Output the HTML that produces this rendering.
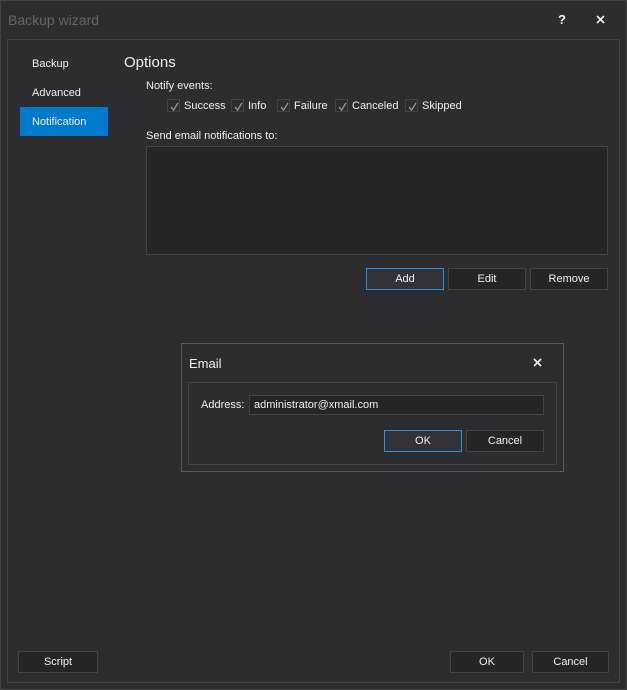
<!DOCTYPE html>
<html><head><style>
*{box-sizing:border-box;margin:0;padding:0}
body{width:627px;height:690px;background:#2d2d30;font-family:"Liberation Sans",sans-serif;font-size:11px;color:#f1f1f1;position:relative;overflow:hidden}
.a{position:absolute}
.win{left:0;top:0;width:627px;height:690px;border:1px solid #434346}
.btn{position:absolute;height:22px;border:1px solid #434346;background:#252526;color:#f1f1f1;text-align:center;line-height:20px;font-size:11px}
.cb{position:absolute;top:99px;width:13px;height:13px;border:1px solid #434346;background:#2d2d30}
.cb svg{position:absolute;left:1px;top:1px}
.lbl{position:absolute;top:100px}
</style></head><body>
<div class="a win"></div>
<div class="a" style="left:8px;top:12px;font-size:14px;color:#656568">Backup wizard</div>
<div class="a" style="left:558px;top:12px;font-size:13px;font-weight:bold;color:#f1f1f1">?</div>
<svg class="a" style="left:596px;top:15px" width="9" height="9"><path d="M1 1L8 8M8 1L1 8" stroke="#f1f1f1" stroke-width="1.6"/></svg>
<div class="a" style="left:7px;top:39px;width:613px;height:644px;border:1px solid #434346"></div>
<div class="a" style="left:32px;top:58px">Backup</div>
<div class="a" style="left:32px;top:87px">Advanced</div>
<div class="a" style="left:20px;top:107px;width:88px;height:29px;background:#007acc"></div>
<div class="a" style="left:32px;top:116px">Notification</div>
<div class="a" style="left:124px;top:54px;font-size:15px">Options</div>
<div class="a" style="left:146px;top:80px">Notify events:</div>
<div class="cb" style="left:167px"><svg width="11" height="11"><path d="M2 6L4.5 9L9 2" stroke="#999" fill="none" stroke-width="1.3"/></svg></div><div class="lbl" style="left:184px">Success</div>
<div class="cb" style="left:231px"><svg width="11" height="11"><path d="M2 6L4.5 9L9 2" stroke="#999" fill="none" stroke-width="1.3"/></svg></div><div class="lbl" style="left:248px">Info</div>
<div class="cb" style="left:277px"><svg width="11" height="11"><path d="M2 6L4.5 9L9 2" stroke="#999" fill="none" stroke-width="1.3"/></svg></div><div class="lbl" style="left:294px">Failure</div>
<div class="cb" style="left:335px"><svg width="11" height="11"><path d="M2 6L4.5 9L9 2" stroke="#999" fill="none" stroke-width="1.3"/></svg></div><div class="lbl" style="left:352px">Canceled</div>
<div class="cb" style="left:405px"><svg width="11" height="11"><path d="M2 6L4.5 9L9 2" stroke="#999" fill="none" stroke-width="1.3"/></svg></div><div class="lbl" style="left:422px">Skipped</div>
<div class="a" style="left:146px;top:130px">Send email notifications to:</div>
<div class="a" style="left:146px;top:146px;width:462px;height:109px;background:#252526;border:1px solid #434346"></div>
<div class="btn" style="left:366px;top:268px;width:78px;border-color:#1c97ea;background:#333337">Add</div>
<div class="btn" style="left:448px;top:268px;width:78px">Edit</div>
<div class="btn" style="left:530px;top:268px;width:78px">Remove</div>
<div class="a" style="left:181px;top:343px;width:383px;height:129px;border:1px solid #5a5a5e;background:#2d2d30"></div>
<div class="a" style="left:189px;top:356px;font-size:13px">Email</div>
<svg class="a" style="left:533px;top:358px" width="9" height="9"><path d="M1 1L8 8M8 1L1 8" stroke="#f1f1f1" stroke-width="1.6"/></svg>
<div class="a" style="left:188px;top:382px;width:369px;height:83px;border:1px solid #434346"></div>
<div class="a" style="left:201px;top:399px">Address:</div>
<div class="a" style="left:249px;top:395px;width:295px;height:20px;background:#252526;border:1px solid #434346;padding-left:4px;line-height:18px">administrator@xmail.com</div>
<div class="btn" style="left:384px;top:430px;width:78px;border-color:#1c97ea;background:#333337">OK</div>
<div class="btn" style="left:466px;top:430px;width:78px">Cancel</div>
<div class="btn" style="left:18px;top:651px;width:80px">Script</div>
<div class="btn" style="left:450px;top:651px;width:74px">OK</div>
<div class="btn" style="left:532px;top:651px;width:77px">Cancel</div>
</body></html>
